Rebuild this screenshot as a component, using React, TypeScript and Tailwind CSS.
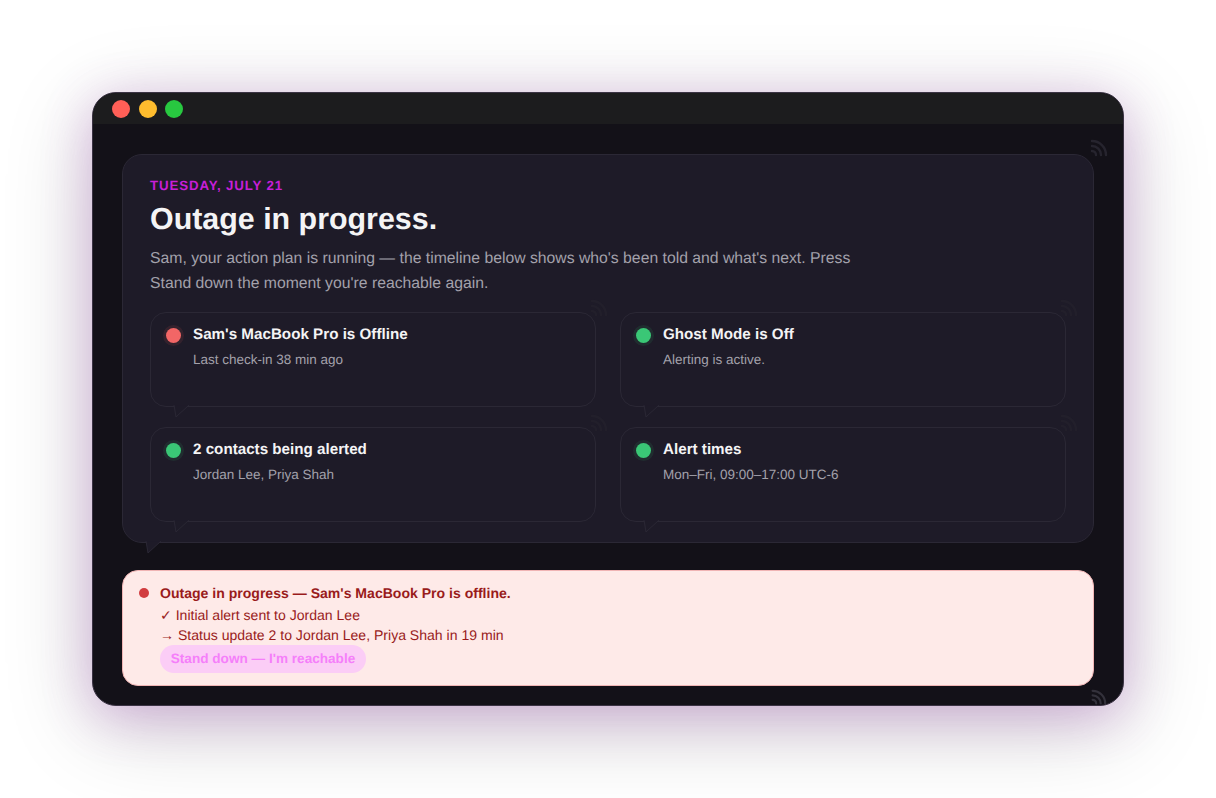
import React from "react";

const font = { fontFamily: '"Liberation Sans", Arial, sans-serif' };

// little "signal" arcs peeking out at the top right of each panel
function Signal({ className }: { className: string }) {
  return (
    <svg viewBox="0 0 20 20" fill="none" stroke="currentColor" strokeWidth="2.4" strokeLinecap="round" className={className}>
      <path d="M4 2a14 14 0 0 1 14 14" />
      <path d="M4 7a9 9 0 0 1 9 9" />
      <path d="M4 12a4 4 0 0 1 4 4" />
    </svg>
  );
}

// speech bubble tail, the fill hides the panel's bottom border
function Tail({ className, fill, stroke }: { className: string; fill: string; stroke: string }) {
  return (
    <svg viewBox="0 0 18 14" className={className}>
      <path d="M1 1 L3 13 L16 1" fill={fill} stroke={stroke} strokeWidth="1" />
      <path d="M1.5 0.5 L15.5 0.5" stroke={fill} strokeWidth="1.6" />
    </svg>
  );
}

interface StatusCardProps {
  tone: "red" | "green";
  title: string;
  detail: string;
}

function StatusCard({ tone, title, detail }: StatusCardProps) {
  return (
    <div className="relative h-[95px] rounded-[16px] border border-[#2b2835] bg-[#1e1b28] pl-[15px] pr-4 pt-[12px]">
      <Signal className="absolute -top-[14px] -right-[13px] h-[20px] w-[20px] text-[#24212c] opacity-80" />
      <div className="flex items-center gap-3">
        <span
          className={
            tone === "red"
              ? "h-[15px] w-[15px] shrink-0 rounded-full bg-[#f26666] ring-[3px] ring-[#f26666]/10"
              : "h-[15px] w-[15px] shrink-0 rounded-full bg-[#3ac776] ring-[3px] ring-[#3ac776]/10"
          }
        />
        <span className="text-[15.2px] font-bold leading-[20px] text-[#f4f4f5]">{title}</span>
      </div>
      <div className="mt-[5px] pl-[27px] text-[13.5px] leading-[20px] text-[#a3a1ab]">{detail}</div>
      <Tail className="absolute -bottom-[12px] left-[22px] h-[14px] w-[18px]" fill="#1e1b28" stroke="#2b2835" />
    </div>
  );
}

export default function App() {
  return (
    <div className="flex h-[798px] w-[1216px] items-center justify-center overflow-hidden bg-white [text-rendering:geometricPrecision]" style={font}>
      <div className="relative h-[614px] w-[1032px] overflow-hidden rounded-[24px] border border-[#3b3344] bg-[#131118] shadow-[0_10px_50px_rgba(170,70,195,0.3),0_20px_90px_rgba(0,0,0,0.2)]">
        <div className="flex h-[31px] items-center gap-[8.5px] bg-[#1c1c1e] pl-[19px]">
          <span className="h-[18px] w-[18px] rounded-full bg-[#ff5f57]" />
          <span className="h-[18px] w-[18px] rounded-full bg-[#febc2e]" />
          <span className="h-[18px] w-[18px] rounded-full bg-[#28c840]" />
        </div>
        <Signal className="absolute right-[15px] top-[46px] h-[20px] w-[20px] text-[#26242e]" />
        <Signal className="absolute right-[16px] -bottom-[2px] h-[18px] w-[18px] text-[#33313b]" />

        <div className="flex flex-col gap-[28px] px-[29px] pt-[30px]">
          <div className="relative h-[389px] rounded-[20px] border border-[#2b2835] bg-[#1e1b28] px-[27px] pt-[23px]">
            <div className="text-[13.3px] font-bold uppercase leading-[16px] tracking-[0.065em] text-[#c81fd8]">Tuesday, July 21</div>
            <h1 className="mt-[5px] text-[30.4px] font-bold leading-[40px] text-[#f4f4f5]">Outage in progress.</h1>
            <p className="mt-[7px] max-w-[720px] text-[15.75px] leading-[25px] text-[#a3a1ab]">
              Sam, your action plan is running — the timeline below shows who's been told and what's next. Press Stand down the moment you're reachable again.
            </p>
            <div className="mt-[16px] grid grid-cols-2 gap-x-[24px] gap-y-[20px]">
              <StatusCard tone="red" title="Sam's MacBook Pro is Offline" detail="Last check-in 38 min ago" />
              <StatusCard tone="green" title="Ghost Mode is Off" detail="Alerting is active." />
              <StatusCard tone="green" title="2 contacts being alerted" detail="Jordan Lee, Priya Shah" />
              <StatusCard tone="green" title="Alert times" detail="Mon–Fri, 09:00–17:00 UTC-6" />
            </div>
            <Tail className="absolute -bottom-[12px] left-[22px] h-[14px] w-[18px]" fill="#1e1b28" stroke="#2b2835" />
          </div>

          <div className="-mt-[1px] flex h-[116px] gap-[11px] rounded-[16px] border border-[#f0b4b4] bg-[#feeae8] pl-[16px] pt-[12px]">
            <span className="mt-[5px] h-[10px] w-[10px] shrink-0 rounded-full bg-[#d13c3f]" />
            <div className="text-[14.05px] leading-[20px] text-[#991b1b]">
              <div className="font-bold">Outage in progress — Sam's MacBook Pro is offline.</div>
              <div className="mt-[2px]">✓ Initial alert sent to Jordan Lee</div>
              <div>→ Status update 2 to Jordan Lee, Priya Shah in 19 min</div>
              <div className="flex h-[28px] w-[206px] items-center justify-center rounded-full bg-[#fbcdf6] text-[13.6px] font-bold text-[#f57ffa]">
                Stand down — I'm reachable
              </div>
            </div>
          </div>
        </div>
      </div>
    </div>
  );
}
